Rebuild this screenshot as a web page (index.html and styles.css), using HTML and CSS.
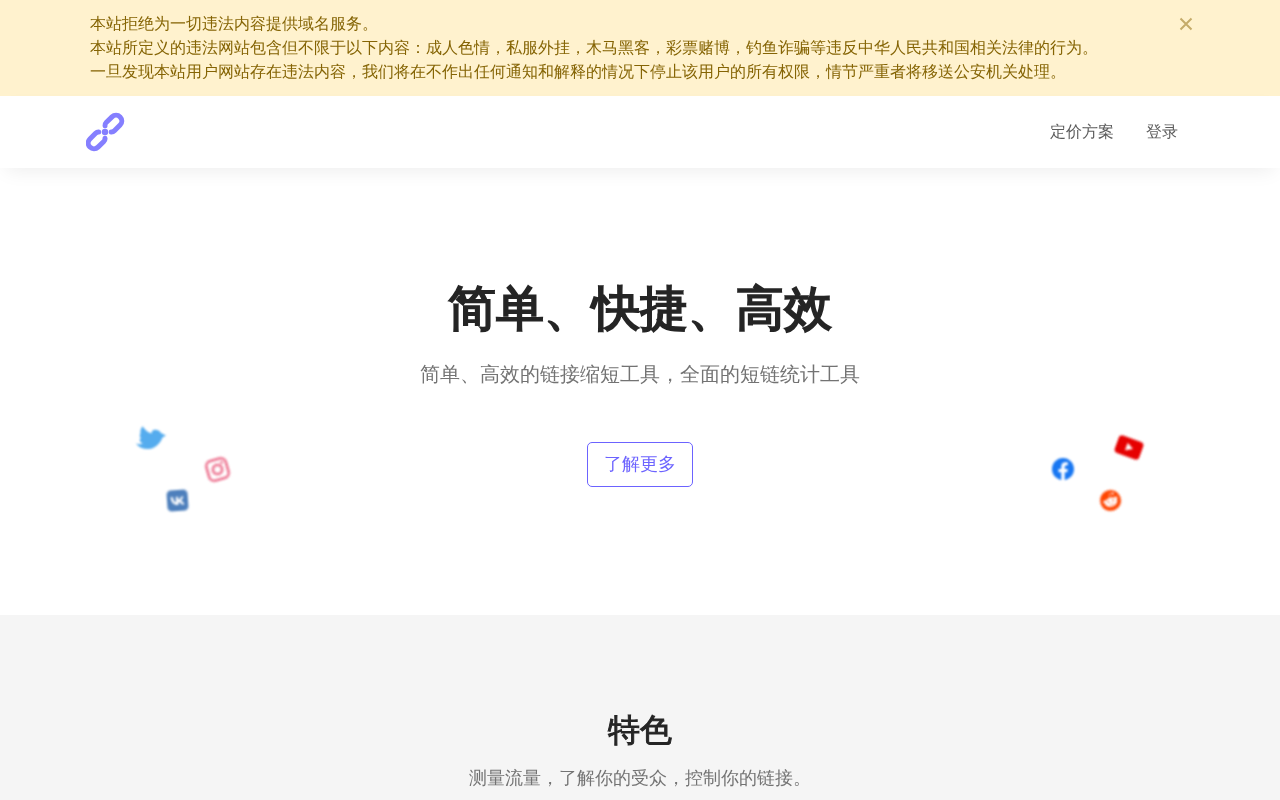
FILE: index.html
```html
<!DOCTYPE html>
<html lang="zh-CN">
<head>
  <meta charset="UTF-8" />
  <meta name="viewport" content="width=device-width, initial-scale=1" />
  <title>简单、快捷、高效</title>
  <link rel="stylesheet" href="styles.css">
</head>
<body>
  <div class="notice" id="notice">
    <div class="container notice-inner">
      <p class="notice-text">
        本站拒绝为一切违法内容提供域名服务。<br>
        本站所定义的违法网站包含但不限于以下内容：成人色情，私服外挂，木马黑客，彩票赌博，钓鱼诈骗等违反中华人民共和国相关法律的行为。<br>
        一旦发现本站用户网站存在违法内容，我们将在不作出任何通知和解释的情况下停止该用户的所有权限，情节严重者将移送公安机关处理。
      </p>
      <button class="notice-close" id="noticeClose" type="button" aria-label="关闭">
        <svg width="16" height="16" viewBox="0 0 16 16"><path d="M2.500 2.500l11 11M13.500 2.500l-11 11" /></svg>
      </button>
    </div>
  </div>

  <header class="header">
    <div class="container header-inner">
      <a class="logo" href="#" aria-label="首页">
        <svg width="40" height="40" viewBox="-19 -20 40 40">
          <path d="M0-6.200C-.2-7.800.3-8.500 1.200-9.400L7-15.100A5.700 5.700 0 0 1 15.100-7L9.400-1.200C8.500-.3 7.800.1 6.200 0" />
          <path d="M0 6.200C.2 7.800-.3 8.500-1.200 9.400L-7 15.100A5.700 5.700 0 0 1-15.100 7L-9.400 1.200C-8.500.3-7.800-.1-6.200 0" />
          <circle r="3.200" />
        </svg>
      </a>
      <nav class="nav">
        <a href="#">定价方案</a>
        <a href="#">登录</a>
      </nav>
    </div>
  </header>

  <main>
    <section class="hero">
      <div class="container hero-inner">
        <h1>简单、快捷、高效</h1>
        <p class="hero-text">简单、高效的链接缩短工具，全面的短链统计工具</p>
        <a class="btn" href="#features">了解更多</a>

        <svg class="social twitter" viewBox="0 0 30 24"><path fill="#55acee" d="M6.500.2C9 4 12 6.500 15.500 7.500C15.500 4 18 3 21 4C23 4.300 24 5.500 25 7L30 9.500L26.500 11.500C24 18 19 22.500 12.500 23C7 23.200 3 21.500 0 17.500C3 18.500 5 18.500 6.800 17.500C4.500 16.500 3.500 15 3.800 13L5 12.500C3.500 10.500 3.500 8.500 4.500 7.500C4 5 4.800 2.500 6.500.2z" /></svg>
        <svg class="social instagram" viewBox="0 0 24 24">
          <g fill="none" stroke="#ee7b96" stroke-width="2.900">
            <rect x="1.500" y="1.500" width="21" height="21" rx="5.500" />
            <circle cx="12" cy="12" r="4.800" />
          </g>
          <circle cx="18" cy="6" r="1.600" fill="#ee7b96" />
        </svg>
        <svg class="social vk" viewBox="0 0 24 24">
          <rect width="24" height="24" rx="5" fill="#4d7fbc" />
          <path fill="#fff" d="M12.600 17.200C7.500 17.200 4.500 13.500 4.200 7.600h2.700c.2 4.200 2 5.900 3.400 6.300V7.600h2.600v3.600c1.500-.2 3.100-1.900 3.600-3.600H19c-.4 2.200-2 3.800-3.200 4.600 1.200.6 3 2 3.800 5h-2.800c-.6-1.800-2-3.100-3.900-3.300v3.300z" />
        </svg>
        <svg class="social facebook" viewBox="0 0 24 24"><path fill="#1877f2" d="M24 12.073c0-6.627-5.373-12-12-12s-12 5.373-12 12c0 5.990 4.388 10.954 10.125 11.854v-8.385H7.078v-3.470h3.047V9.430c0-3.007 1.792-4.669 4.533-4.669 1.312 0 2.686.235 2.686.235v2.953H15.830c-1.491 0-1.956.925-1.956 1.874v2.250h3.328l-.532 3.470h-2.796v8.385C19.612 23.027 24 18.062 24 12.073z" /></svg>
        <svg class="social youtube" viewBox="0 0 28 20">
          <rect width="28" height="20" rx="4" fill="#e60000" />
          <path fill="#fff" d="M11 5.800l7.500 4.200-7.500 4.200z" />
        </svg>
        <svg class="social reddit" viewBox="0 0 24 24">
          <circle cx="12" cy="12" r="12" fill="#ff4500" />
          <path d="M12 9l1.300-4.600 3.500.8" fill="none" stroke="#fff" stroke-width=".6" />
          <g fill="#fff">
            <circle cx="17.200" cy="5.300" r="1.200" />
            <circle cx="5.300" cy="11.500" r="1.700" />
            <circle cx="18.700" cy="11.500" r="1.700" />
            <ellipse cx="12" cy="14" rx="7.200" ry="5.200" />
          </g>
          <g fill="#ff4500">
            <circle cx="9.200" cy="12.600" r="1" />
            <circle cx="14.800" cy="12.600" r="1" />
          </g>
          <path d="M9.200 16c1.500 1.200 4.100 1.200 5.600 0" fill="none" stroke="#ff4500" stroke-width=".6" />
        </svg>
      </div>
    </section>

    <section class="features" id="features">
      <div class="container">
        <h2>特色</h2>
        <p class="features-text">测量流量，了解你的受众，控制你的链接。</p>
      </div>
    </section>
  </main>

  <script>
    const notice = document.getElementById("notice");
    document.getElementById("noticeClose").addEventListener("click", () => {
      notice.remove();
    });
  </script>
</body>
</html>
```

FILE: styles.css
```css
* {
  box-sizing: border-box;
}

body {
  margin: 0;
  font-family: "Liberation Sans", "WenQuanYi Zen Hei", "Noto Sans CJK SC", sans-serif;
  font-size: 16px;
  line-height: 24px;
  color: #252525;
  background: #fff;
}

h1, h2, p {
  margin: 0;
}

a {
  text-decoration: none;
}

.container {
  max-width: 1140px;
  margin: 0 auto;
  padding: 0 16px;
}

/* notice bar */
.notice {
  background: #fff2ce;
  color: #856404;
}

.notice-inner {
  display: flex;
  justify-content: space-between;
  align-items: flex-start;
  padding: 12px 16px 12px 20px;
}

.notice-close {
  display: flex;
  align-items: center;
  height: 24px;
  padding: 0;
  margin: 0;
  border: none;
  background: none;
  cursor: pointer;
}

.notice-close svg {
  stroke: #c5ab69;
  stroke-width: 2;
}

/* header */
.header {
  position: relative;
  background: #fff;
  box-shadow: 0 8px 20px -6px rgba(0, 0, 0, 0.08);
}

.header-inner {
  display: flex;
  justify-content: space-between;
  align-items: center;
  min-height: 72px;
}

.logo svg {
  display: block;
  fill: none;
  stroke: #857fff;
  stroke-width: 5;
  stroke-linecap: round;
}

.logo circle {
  fill: #857fff;
  stroke: none;
}

.nav {
  display: flex;
}

.nav a {
  padding: 8px 16px;
  color: #5c5c5c;
}

/* hero */
.hero {
  padding: 112px 0 128px;
  text-align: center;
}

.hero-inner {
  position: relative;
}

/* the chinese font has no bold cut, thicken it with a stroke */
h1 {
  margin-bottom: 20px;
  font-size: 48px;
  font-weight: 400;
  line-height: 58px;
  -webkit-text-stroke: 2px #252525;
}

.hero-text {
  margin-bottom: 52px;
  font-size: 20px;
  line-height: 32px;
  color: #737373;
}

.btn {
  display: inline-block;
  vertical-align: top;
  padding: 8px 16px;
  border: 1px solid #6c63ff;
  border-radius: 5px;
  font-size: 18px;
  line-height: 27px;
  color: #6c63ff;
}

.btn:hover {
  background: #6c63ff;
  color: #fff;
}

/* icons floating round the hero */
.social {
  position: absolute;
  width: 21px;
  height: 21px;
  filter: blur(1px);
}

.twitter {
  top: 146px;
  left: 66px;
  width: 30px;
  height: 24px;
}

.instagram {
  top: 178px;
  left: 136px;
  width: 23px;
  height: 23px;
  transform: rotate(-16deg);
}

.vk {
  top: 210px;
  left: 97px;
  transform: rotate(-4deg);
}

.facebook {
  top: 178px;
  right: 136px;
  width: 22px;
  height: 22px;
}

.youtube {
  top: 158px;
  right: 68px;
  width: 26px;
  height: 19px;
  transform: rotate(20deg);
}

.reddit {
  top: 210px;
  right: 89px;
  transform: rotate(-20deg);
}

/* features */
.features {
  padding: 96px 0;
  background: #f5f5f5;
  text-align: center;
}

h2 {
  margin-bottom: 16px;
  font-size: 32px;
  font-weight: 400;
  line-height: 38px;
  -webkit-text-stroke: 1px #252525;
}

.features-text {
  font-size: 18px;
  line-height: 27px;
  color: #737373;
}

@media (max-width: 800px) {
  .social {
    display: none;
  }
}
```
